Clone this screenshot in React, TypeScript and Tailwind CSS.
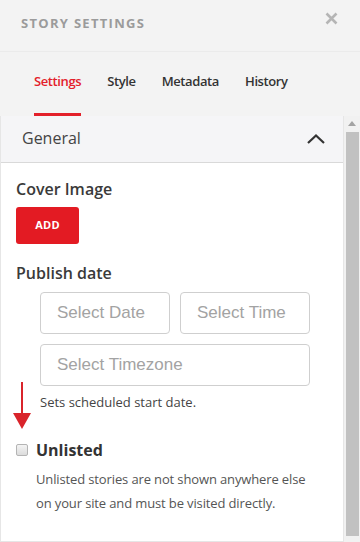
import React from 'react'

const font = { fontFamily: '"Open Sans", "Liberation Sans", sans-serif' }

function Tab({ label, active }: { label: string; active?: boolean }) {
  return (
    <div className="relative h-full pt-[20px]">
      <span className={`block text-[13px] leading-[18px] font-semibold tracking-[-0.03em] ${active ? 'text-[#e3202a]' : 'text-[#333]'}`}>{label}</span>
      {active && <div className="absolute left-0 right-0 bottom-0 h-[3px] bg-[#e3202a]" />}
    </div>
  )
}

function Field({ label, className }: { label: string; className?: string }) {
  return (
    <div
      className={`h-[42px] border border-[#cfcfcf] rounded-[4px] flex items-center px-[16px] text-[17px] text-[#a3a3a3] bg-white ${className ?? ''}`}
      style={{ fontFamily: '"Liberation Sans", Arial, sans-serif' }}
    >
      {label}
    </div>
  )
}

export default function App() {
  return (
    <div className="w-[360px] h-[542px] bg-[#f3f3f3] flex flex-col overflow-hidden" style={font}>
      <div className="h-[52px] flex items-start justify-between pl-[21px] pr-[22px] border-b border-[#ebebeb] shrink-0">
        <span className="mt-[14px] text-[13px] font-bold tracking-[0.1em] text-[#9b9b9b]">STORY SETTINGS</span>
        <svg className="mt-[12px]" width="13" height="13" viewBox="0 0 13 13">
          <path d="M1.5 1.5 L11.5 11.5 M11.5 1.5 L1.5 11.5" stroke="#b5b5b5" strokeWidth="2.6" />
        </svg>
      </div>

      <div className="h-[64px] flex items-stretch gap-[26px] pl-[34px] shrink-0">
        <Tab label="Settings" active />
        <Tab label="Style" />
        <Tab label="Metadata" />
        <Tab label="History" />
      </div>

      <div className="flex-1 flex min-h-0">
        <div className="flex-1 bg-white border-l border-b border-[#e6e6e6] flex flex-col">
          <div className="h-[47px] bg-[#f5f5f7] border-b border-[#d9d9d9] flex items-center justify-between pl-[21px] pr-[17px] shrink-0">
            <span className="text-[16px] text-[#444] -mt-[3px]">General</span>
            <svg width="20" height="12" viewBox="0 0 20 12">
              <path d="M2 10 L10 2.5 L18 10" stroke="#333" strokeWidth="2.2" fill="none" />
            </svg>
          </div>

          <div className="pl-[15px] pr-[16px] pt-[15px]">
            <div className="text-[16px] font-semibold text-[#3a3a3a] leading-[22px]">Cover Image</div>
            <button className="mt-[7px] w-[63px] h-[37px] rounded-[3px] bg-[#e31b23] text-white text-[11px] font-bold tracking-[0.02em]">
              ADD
            </button>

            <div className="mt-[18px] text-[16px] font-semibold text-[#3a3a3a] leading-[22px]">Publish date</div>

            <div className="relative pl-[24px] pr-[17px] mt-[8px]">
              <div className="flex gap-[10px]">
                <Field label="Select Date" className="flex-1" />
                <Field label="Select Time" className="flex-1" />
              </div>
              <Field label="Select Timezone" className="mt-[10px]" />
              <div className="mt-[8px] text-[13px] text-[#444] leading-[16px]">Sets scheduled start date.</div>

              <svg className="absolute left-[-4px] top-[90px]" width="20" height="48" viewBox="0 0 20 48">
                <rect x="9" y="0" width="2" height="34" fill="#d9242b" />
                <path d="M1 31 L19 31 L10 47 Z" fill="#d9242b" />
              </svg>
            </div>

            <div className="mt-[30px] flex items-center gap-[8px]">
              <div className="w-[12px] h-[12px] rounded-[2px] border border-[#b4b4b4] bg-gradient-to-b from-[#f4f4f4] to-[#dcdcdc]" />
              <span className="text-[16px] font-bold text-[#333] leading-[20px]">Unlisted</span>
            </div>
            <p className="pl-[20px] mr-[16px] mt-[7px] text-[13px] leading-[24px] text-[#555] tracking-[-0.01em]">
              Unlisted stories are not shown anywhere else on your site and must be visited directly.
            </p>
          </div>
        </div>

        <div className="w-[17px] flex flex-col items-center bg-[#f1f1f1] pt-[5px] border-l border-[#e6e6e6]">
          <svg width="8" height="5" viewBox="0 0 8 5">
            <path d="M0 5 L4 0 L8 5 Z" fill="#a3a3a3" />
          </svg>
          <div className="mt-[6px] w-[13px] flex-1 bg-[#c1c1c1] mb-[6px]" />
        </div>
      </div>
    </div>
  )
}
